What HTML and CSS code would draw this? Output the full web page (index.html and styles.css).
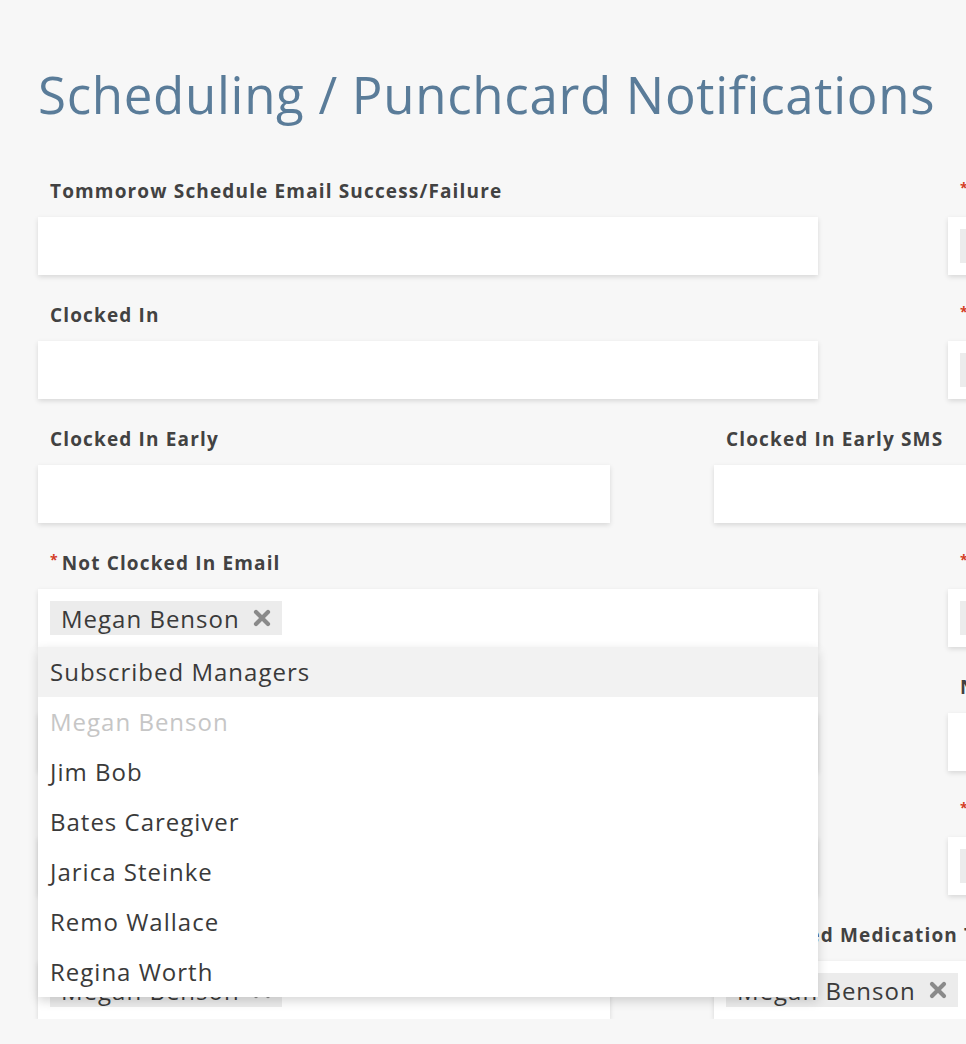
FILE: index.html
```html
<!DOCTYPE html>
<html lang="en">
<head>
<meta charset="utf-8">
<title>Scheduling / Punchcard Notifications</title>
<link rel="stylesheet" href="styles.css">
</head>
<body>
<main class="page">
  <h1 class="title">Scheduling / Punchcard Notifications</h1>
  <div class="form">
    <div class="row row-wide">
      <div class="field">
        <label class="label">Tommorow Schedule Email Success/Failure</label>
        <div class="input"></div>
      </div>
      <div class="field">
        <label class="label"><span class="req">*</span>Tommorow Schedule SMS Success/Failure</label>
        <div class="input"><span class="chip">Megan Benson <svg class="x" viewBox="0 0 20 20"><path d="M4 4L16 16M16 4L4 16"/></svg></span></div>
      </div>
    </div>
    <div class="row row-wide">
      <div class="field">
        <label class="label">Clocked In</label>
        <div class="input"></div>
      </div>
      <div class="field">
        <label class="label"><span class="req">*</span>Clocked In SMS</label>
        <div class="input"><span class="chip">Megan Benson <svg class="x" viewBox="0 0 20 20"><path d="M4 4L16 16M16 4L4 16"/></svg></span></div>
      </div>
    </div>
    <div class="row row-half">
      <div class="field">
        <label class="label">Clocked In Early</label>
        <div class="input"></div>
      </div>
      <div class="field">
        <label class="label">Clocked In Early SMS</label>
        <div class="input"></div>
      </div>
    </div>
    <div class="row row-wide row-open">
      <div class="field">
        <label class="label"><span class="req">*</span>Not Clocked In Email</label>
        <div class="input input-open">
          <span class="chip">Megan Benson <svg class="x" viewBox="0 0 20 20"><path d="M4 4L16 16M16 4L4 16"/></svg></span>
          <ul class="menu">
            <li class="opt opt-active">Subscribed Managers</li>
            <li class="opt opt-disabled">Megan Benson</li>
            <li class="opt">Jim Bob</li>
            <li class="opt">Bates Caregiver</li>
            <li class="opt">Jarica Steinke</li>
            <li class="opt">Remo Wallace</li>
            <li class="opt">Regina Worth</li>
          </ul>
        </div>
      </div>
      <div class="field">
        <label class="label"><span class="req">*</span>Not Clocked In SMS</label>
        <div class="input"><span class="chip">Megan Benson <svg class="x" viewBox="0 0 20 20"><path d="M4 4L16 16M16 4L4 16"/></svg></span></div>
      </div>
    </div>
    <div class="row row-wide">
      <div class="field">
        <label class="label">Not Clocked Out</label>
        <div class="input"></div>
      </div>
      <div class="field">
        <label class="label">Not Clocked Out SMS</label>
        <div class="input"></div>
      </div>
    </div>
    <div class="row row-wide">
      <div class="field">
        <label class="label"><span class="req">*</span>Missed Shift Email</label>
        <div class="input"><span class="chip">Megan Benson <svg class="x" viewBox="0 0 20 20"><path d="M4 4L16 16M16 4L4 16"/></svg></span></div>
      </div>
      <div class="field">
        <label class="label"><span class="req">*</span>Missed Shift SMS</label>
        <div class="input"><span class="chip">Megan Benson <svg class="x" viewBox="0 0 20 20"><path d="M4 4L16 16M16 4L4 16"/></svg></span></div>
      </div>
    </div>
    <div class="row row-half">
      <div class="field">
        <label class="label">Medication Taken</label>
        <div class="input"><span class="chip">Megan Benson <svg class="x" viewBox="0 0 20 20"><path d="M4 4L16 16M16 4L4 16"/></svg></span></div>
      </div>
      <div class="field">
        <label class="label">Scheduled Medication Taken</label>
        <div class="input"><span class="chip">Megan Benson <svg class="x" viewBox="0 0 20 20"><path d="M4 4L16 16M16 4L4 16"/></svg></span></div>
      </div>
    </div>
  </div>
</main>
</body>
</html>
```
FILE: styles.css
```css
html, body {
  margin: 0;
  padding: 0;
  background: #f7f7f7;
  overflow: hidden;
}
body {
  font-family: "Open Sans", "Liberation Sans", sans-serif;
  color: #3e3e3e;
}
.page {
  padding: 63px 0 0 38px;
  width: 2000px;
}
.title {
  margin: 0;
  font-size: 51px;
  line-height: 62px;
  font-weight: 400;
  letter-spacing: 0.7px;
  color: #5a7c99;
}
.form {
  margin-top: 54px;
  display: flex;
  flex-direction: column;
  gap: 28px;
}
.row {
  display: flex;
}
.row-wide { gap: 130px; }
.row-wide .field { width: 780px; }
.row-half { gap: 104px; }
.row-half .field { width: 572px; }
.row-open { position: relative; z-index: 5; }
.field {
  display: flex;
  flex-direction: column;
  gap: 14px;
}
.label {
  display: flex;
  align-items: center;
  height: 24px;
  padding-left: 12px;
  font-size: 19px;
  font-weight: 700;
  letter-spacing: 1.15px;
  white-space: nowrap;
  color: #424242;
}
.req {
  color: #d33c26;
  font-size: 14px;
  line-height: 1;
  letter-spacing: 0;
  margin-right: 4px;
  align-self: flex-start;
  padding-top: 2px;
}
.input {
  height: 58px;
  box-sizing: border-box;
  padding: 12px;
  background: #fff;
  box-shadow: 0 2px 5px rgba(0, 0, 0, 0.13);
}
.input-open { position: relative; }
.chip {
  display: inline-flex;
  align-items: center;
  gap: 12px;
  height: 34px;
  padding: 0 10px 0 11px;
  background: #ececec;
  font-size: 24px;
  letter-spacing: 1px;
  color: #3a3a3a;
}
.x {
  width: 20px;
  height: 20px;
  stroke: #8a8a8a;
  stroke-width: 4.2;
  stroke-linecap: round;
  fill: none;
}
.menu {
  position: absolute;
  left: 0;
  right: 0;
  top: 100%;
  margin: 0;
  padding: 0;
  list-style: none;
  background: #fff;
  box-shadow: 0 4px 10px rgba(0, 0, 0, 0.16);
}
.opt {
  height: 50px;
  line-height: 50px;
  padding-left: 12px;
  font-size: 24px;
  letter-spacing: 1px;
  color: #3a3a3a;
}
.opt-active { background: #f2f2f2; }
.opt-disabled { color: #c6c6c6; }
```
